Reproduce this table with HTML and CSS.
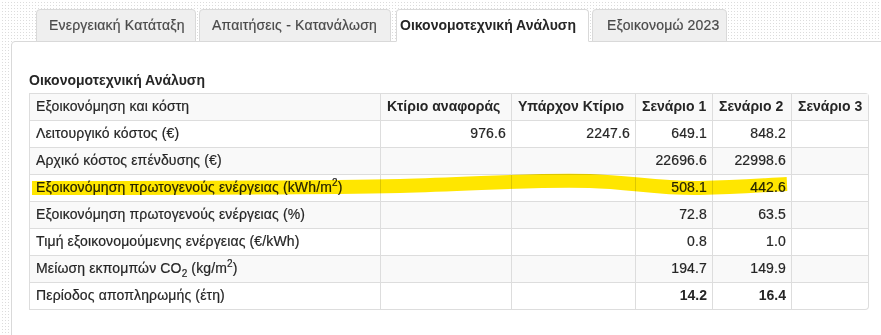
FILE: index.html
```html
<!DOCTYPE html>
<html lang="el">
<head>
<meta charset="utf-8">
<title>Οικονομοτεχνική Ανάλυση</title>
<link rel="stylesheet" href="styles.css">
</head>
<body>
<div class="page">
  <ul class="tabs">
    <li class="tab tab-1"><a>Ενεργειακή Κατάταξη</a></li>
    <li class="tab tab-2"><a>Απαιτήσεις - Κατανάλωση</a></li>
    <li class="tab tab-3 active"><a>Οικονομοτεχνική Ανάλυση</a></li>
    <li class="tab tab-4"><a>Εξοικονομώ 2023</a></li>
  </ul>
  <div class="panel">
    <h4 class="title">Οικονομοτεχνική Ανάλυση</h4>
    <table class="grid">
      <colgroup>
        <col class="c-label"><col class="c-ref"><col class="c-exist"><col class="c-s1"><col class="c-s2"><col class="c-s3">
      </colgroup>
      <tbody>
        <tr class="head">
          <td>Εξοικονόμηση και κόστη</td>
          <th>Κτίριο αναφοράς</th>
          <th>Υπάρχον Κτίριο</th>
          <th>Σενάριο 1</th>
          <th>Σενάριο 2</th>
          <th>Σενάριο 3</th>
        </tr>
        <tr>
          <td>Λειτουργικό κόστος (€)</td>
          <td class="num">976.6</td>
          <td class="num">2247.6</td>
          <td class="num">649.1</td>
          <td class="num">848.2</td>
          <td class="num"></td>
        </tr>
        <tr>
          <td>Αρχικό κόστος επένδυσης (€)</td>
          <td class="num"></td>
          <td class="num"></td>
          <td class="num">22696.6</td>
          <td class="num">22998.6</td>
          <td class="num"></td>
        </tr>
        <tr>
          <td>Εξοικονόμηση πρωτογενούς ενέργειας (kWh/m<sup>2</sup>)</td>
          <td class="num"></td>
          <td class="num"></td>
          <td class="num">508.1</td>
          <td class="num">442.6</td>
          <td class="num"></td>
        </tr>
        <tr>
          <td>Εξοικονόμηση πρωτογενούς ενέργειας (%)</td>
          <td class="num"></td>
          <td class="num"></td>
          <td class="num">72.8</td>
          <td class="num">63.5</td>
          <td class="num"></td>
        </tr>
        <tr>
          <td>Τιμή εξοικονομούμενης ενέργειας (€/kWh)</td>
          <td class="num"></td>
          <td class="num"></td>
          <td class="num">0.8</td>
          <td class="num">1.0</td>
          <td class="num"></td>
        </tr>
        <tr>
          <td>Μείωση εκπομπών CO<sub>2</sub> (kg/m<sup>2</sup>)</td>
          <td class="num"></td>
          <td class="num"></td>
          <td class="num">194.7</td>
          <td class="num">149.9</td>
          <td class="num"></td>
        </tr>
        <tr>
          <td>Περίοδος αποπληρωμής (έτη)</td>
          <td class="num"></td>
          <td class="num"></td>
          <td class="num strong">14.2</td>
          <td class="num strong">16.4</td>
          <td class="num"></td>
        </tr>
      </tbody>
    </table>
  </div>
</div>
<svg class="marker" viewBox="0 0 881 335" width="881" height="335" aria-hidden="true">
  <path d="M32,188 C120,188 300,188 400,186 C480,184 540,179 590,181 C630,182 660,189 700,188 C740,187 765,185 787,184" fill="none" stroke="#ffe600" stroke-width="14"/>
</svg>
</body>
</html>
```
FILE: styles.css
```css
html, body {
  margin: 0;
  padding: 0;
}
body {
  width: 881px;
  height: 335px;
  overflow: hidden;
  position: relative;
  font-family: "Liberation Sans", Arial, sans-serif;
  font-size: 14px;
  line-height: 20px;
  color: #262626;
  -webkit-text-stroke: 0.2px currentColor;
  background-color: #dcdcdc;
  background-image:
    linear-gradient(to right, #fff 2px, transparent 2px),
    linear-gradient(to bottom, #fff 2px, transparent 2px);
  background-size: 3px 3px;
}
.page {
  padding: 9px 0 0 11px;
}
.tabs {
  list-style: none;
  margin: 0 0 -1px 25px;
  padding: 0;
  display: flex;
  position: relative;
  z-index: 1;
}
.tab a {
  display: block;
  box-sizing: border-box;
  padding: 5px 0 6px 12px;
  border: 1px solid #d9d9d9;
  border-radius: 4px 4px 0 0;
  background: #efefef;
  color: #4a4a4a;
  letter-spacing: 0.2px;
  white-space: nowrap;
  cursor: pointer;
}
.tab-1 a { width: 160px; }
.tab-2 { margin-left: 3px; }
.tab-2 a { width: 192px; }
.tab-3 { margin-left: 5px; }
.tab-3 a { width: 193px; padding-left: 3px; }
.tab-4 { margin-left: 3px; }
.tab-4 a { width: 135px; padding-left: 14px; }
.tab.active a {
  background: #fff;
  border-bottom-color: #fff;
  color: #262626;
  font-weight: bold;
  letter-spacing: 0;
  -webkit-text-stroke: 0;
}
.panel {
  width: 1000px;
  height: 400px;
  background: #fff;
  border: 1px solid #d9d9d9;
  border-radius: 4px 0 0 0;
  padding: 28px 0 0 17px;
}
.title {
  margin: 0 0 3px;
  font-size: 14px;
  line-height: 20px;
  font-weight: bold;
  -webkit-text-stroke: 0;
}
.grid {
  width: 840px;
  table-layout: fixed;
  border-collapse: separate;
  border-spacing: 0;
  border: 1px solid #ddd;
  border-left: 0;
  border-radius: 0 4px 4px 0;
}
.c-label { width: 351px; }
.c-ref { width: 131px; }
.c-exist { width: 124px; }
.c-s1 { width: 77px; }
.c-s2 { width: 79px; }
.c-s3 { width: 77px; }
.grid td, .grid th {
  padding: 2px 6px 4px;
  border-left: 1px solid #ddd;
  border-top: 1px solid #ddd;
  text-align: left;
  vertical-align: top;
  white-space: nowrap;
  letter-spacing: 0.14px;
}
.grid tr:first-child td, .grid tr:first-child th {
  border-top: 0;
}
.grid tr:nth-child(odd) td, .grid tr:nth-child(odd) th {
  background: #f9f9f9;
}
.grid th {
  font-weight: bold;
  letter-spacing: 0;
  -webkit-text-stroke: 0;
}
.grid .num {
  text-align: right;
  padding-right: 5px;
}
.grid .strong {
  font-weight: bold;
  letter-spacing: 0;
  -webkit-text-stroke: 0;
}
sup, sub {
  font-size: 10px;
  line-height: 0;
}
.marker {
  position: absolute;
  left: 0;
  top: 0;
  pointer-events: none;
  mix-blend-mode: multiply;
}
```
